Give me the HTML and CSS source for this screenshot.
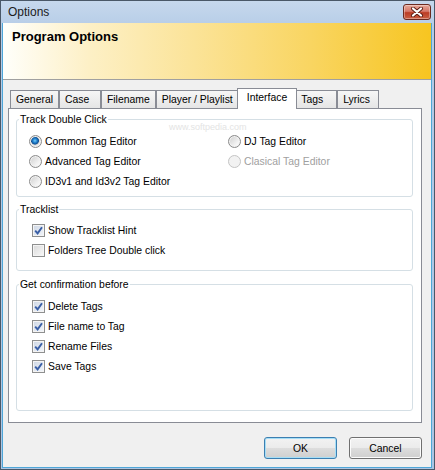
FILE: index.html
```html
<!DOCTYPE html>
<html lang="en">
<head>
  <meta charset="UTF-8">
  <title>Options</title>
  <link rel="stylesheet" href="styles.css">
</head>
<body>
  <div class="window">
    <div class="titlebar">
      <span class="title">Options</span>
      <span class="close-btn">
        <svg width="14" height="10" viewBox="0 0 14 10">
          <path d="M3 1.5 L11 8.5 M11 1.5 L3 8.5" stroke="#5a1d14" stroke-width="4" stroke-linecap="round"/>
          <path d="M3 1.5 L11 8.5 M11 1.5 L3 8.5" stroke="#fff" stroke-width="2.2" stroke-linecap="round"/>
        </svg>
      </span>
    </div>

    <div class="client">
      <div class="banner">
        <h1>Program Options</h1>
      </div>

      <div class="tabs">
        <span class="tab">General</span>
        <span class="tab">Case</span>
        <span class="tab">Filename</span>
        <span class="tab">Player / Playlist</span>
        <span class="tab active">Interface</span>
        <span class="tab">Tags</span>
        <span class="tab">Lyrics</span>
      </div>

      <div class="panel">
        <span class="watermark">www.softpedia.com</span>

        <fieldset class="group group-track">
          <legend>Track Double Click</legend>
          <div class="body">
            <div class="col col-left">
              <label class="opt"><span class="radio checked"></span>Common Tag Editor</label>
              <label class="opt"><span class="radio"></span>Advanced Tag Editor</label>
              <label class="opt"><span class="radio"></span>ID3v1 and Id3v2 Tag Editor</label>
            </div>
            <div class="col">
              <label class="opt"><span class="radio"></span>DJ Tag Editor</label>
              <label class="opt disabled"><span class="radio"></span>Clasical Tag Editor</label>
            </div>
          </div>
        </fieldset>

        <fieldset class="group group-list">
          <legend>Tracklist</legend>
          <div class="body">
            <label class="opt"><span class="check on"><svg width="9" height="9" viewBox="0 0 9 9"><path d="M1.2 4.6 L3.6 7.4 L8 1.2" fill="none" stroke="#3a5fa6" stroke-width="1.9"/></svg></span>Show Tracklist Hint</label>
            <label class="opt"><span class="check"></span>Folders Tree Double click</label>
          </div>
        </fieldset>

        <fieldset class="group group-confirm">
          <legend>Get confirmation before</legend>
          <div class="body">
            <label class="opt"><span class="check on"><svg width="9" height="9" viewBox="0 0 9 9"><path d="M1.2 4.6 L3.6 7.4 L8 1.2" fill="none" stroke="#3a5fa6" stroke-width="1.9"/></svg></span>Delete Tags</label>
            <label class="opt"><span class="check on"><svg width="9" height="9" viewBox="0 0 9 9"><path d="M1.2 4.6 L3.6 7.4 L8 1.2" fill="none" stroke="#3a5fa6" stroke-width="1.9"/></svg></span>File name to Tag</label>
            <label class="opt"><span class="check on"><svg width="9" height="9" viewBox="0 0 9 9"><path d="M1.2 4.6 L3.6 7.4 L8 1.2" fill="none" stroke="#3a5fa6" stroke-width="1.9"/></svg></span>Rename Files</label>
            <label class="opt"><span class="check on"><svg width="9" height="9" viewBox="0 0 9 9"><path d="M1.2 4.6 L3.6 7.4 L8 1.2" fill="none" stroke="#3a5fa6" stroke-width="1.9"/></svg></span>Save Tags</label>
          </div>
        </fieldset>
      </div>

      <div class="buttons">
        <button class="btn default">OK</button>
        <button class="btn">Cancel</button>
      </div>
    </div>
  </div>
</body>
</html>
```

FILE: styles.css
```css
/* Reset */
* {
    margin: 0;
    padding: 0;
    box-sizing: border-box;
}

body {
    width: 435px;
    height: 470px;
    font-family: "Liberation Sans", Arial, sans-serif;
    font-size: 10.4px;
    color: #000;
    background: #fff;
}

/* Window frame */
.window {
    width: 435px;
    height: 470px;
    border: 1px solid #4a5868;
    background: linear-gradient(#c6d8ed, #b4cbe6 30px, #abc5e3);
    display: flex;
    flex-direction: column;
}

.titlebar {
    height: 22px;
    display: flex;
    justify-content: space-between;
    align-items: flex-start;
    padding-left: 7px;
}

.title {
    font-size: 12px;
    line-height: 22px;
    color: #1b1b1b;
}

.close-btn {
    width: 28px;
    height: 16px;
    margin: 3px 3px 0 0;
    border: 1px solid #6b2a20;
    border-radius: 3px;
    background: linear-gradient(#e6a898, #d6786a 45%, #bb3c24 55%, #c95f44);
    box-shadow: inset 0 0 0 1px rgba(255, 255, 255, 0.35);
    display: flex;
    align-items: center;
    justify-content: center;
}

.client {
    flex: 1;
    margin: 0 2px 1px 1px;
    border: 1px solid #4ea6d8;
    border-top: none;
    background: #f0f0f0;
    display: flex;
    flex-direction: column;
}

/* Yellow header */
.banner {
    height: 57px;
    border-bottom: 1px solid #a0a0a0;
    background: linear-gradient(to right, #fffffb 0%, #fdf0c6 20%, #fbe397 45%, #f9d561 72%, #f7c520 100%);
    padding: 6px 9px;
}

.banner h1 {
    font-size: 13px;
    font-weight: bold;
    line-height: 16px;
}

/* Tabs */
.tabs {
    display: flex;
    align-items: flex-end;
    height: 20px;
    margin: 8px 0 0 5px;
    padding-left: 2px;
}

.tab {
    flex: none;
    height: 18px;
    min-width: 42px;
    padding: 0 5px;
    border: 1px solid #898c95;
    border-bottom: none;
    background: linear-gradient(#f6f6f6, #e5e5e5);
    line-height: 18px;
    white-space: nowrap;
}

.tab.active {
    height: 21px;
    margin: 0 -2px -1px;
    padding: 0 9px;
    background: #fff;
    line-height: 17px;
    position: relative;
    z-index: 1;
}

.panel {
    height: 315px;
    margin: 0 9px 0 5px;
    border: 1px solid #898c95;
    background: #fff;
    padding: 4px 8px 11px 7px;
    display: flex;
    flex-direction: column;
    position: relative;
}

.watermark {
    position: absolute;
    left: 160px;
    top: 13px;
    font-size: 9px;
    color: #e4e4e4;
}

/* Group boxes */
.group {
    border: 1px solid #d5dfe5;
    border-radius: 3px;
    min-width: 0;
}

.group legend {
    margin-left: 2px;
    padding: 0 1px;
    line-height: 13px;
}

.group-track .body {
    display: flex;
    padding: 5px 0 5px 12px;
}

.group-track .col-left {
    flex: none;
    width: 199px;
}

.group-list {
    margin-top: 6px;
}

.group-list .body {
    padding: 4px 0 10px 15px;
}

.group-confirm {
    margin-top: 7px;
    flex: 1;
}

.group-confirm .body {
    padding: 5px 0 0 15px;
}

.opt {
    display: flex;
    align-items: center;
    gap: 3px;
    height: 20px;
    white-space: nowrap;
}

.opt.disabled {
    color: #a0a0a0;
}

/* Radio buttons */
.radio {
    flex: none;
    width: 13px;
    height: 13px;
    border-radius: 50%;
    border: 1px solid #8b8b8b;
    background: linear-gradient(135deg, #cdcdcd, #f4f4f4 70%, #fff);
    box-shadow: inset 0 0 0 1px #f2f2f2;
}

.radio.checked {
    background: radial-gradient(circle at 45% 42%, #74cdfb 0, #2383cf 2px, #104f91 3.6px, #d6d6d6 4.3px, #f6f6f6 6px);
}

.disabled .radio {
    border-color: #c4c4c4;
    background: #f2f2f2;
}

/* Checkboxes */
.check {
    flex: none;
    width: 13px;
    height: 13px;
    border: 1px solid #8e8f8f;
    background: linear-gradient(135deg, #d9d9d9, #f9f9f9);
    box-shadow: inset 0 0 0 1px #f4f4f4;
    display: flex;
    align-items: center;
    justify-content: center;
}

.check.on {
    background: linear-gradient(135deg, #cdd6e4, #f3f6fa);
}

/* Dialog buttons */
.buttons {
    display: flex;
    justify-content: flex-end;
    gap: 12px;
    margin: 14px 9px 0 0;
}

.btn {
    width: 73px;
    height: 22px;
    border: 1px solid #707070;
    border-radius: 3px;
    background: linear-gradient(#f2f2f2 0%, #ebebeb 50%, #dddddd 51%, #cfcfcf 100%);
    box-shadow: inset 0 0 0 1px #fcfcfc;
    font: inherit;
    color: #000;
}

.btn.default {
    border-color: #3c7fb1;
    box-shadow: inset 0 0 0 1px #a6def6;
}
```
